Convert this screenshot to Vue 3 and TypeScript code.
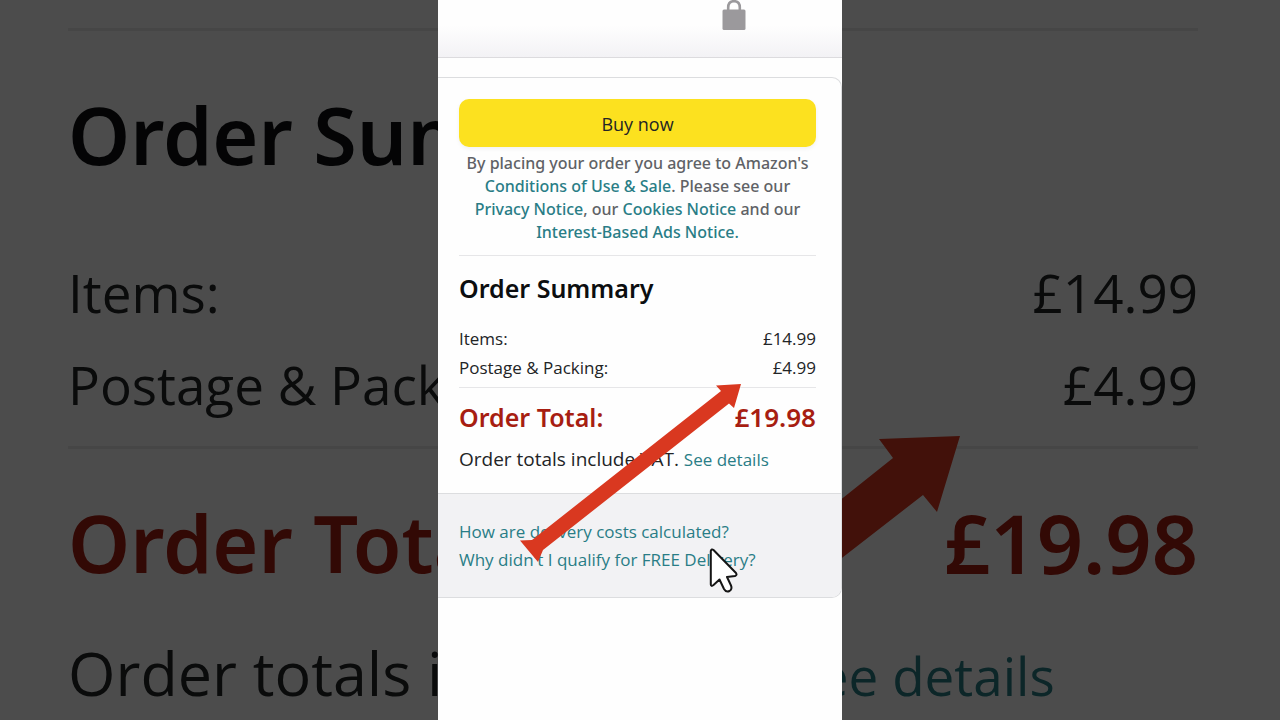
<script setup lang="ts">
interface Charge {
  label: string
  amount: string
}

const charges: Charge[] = [
  { label: 'Items:', amount: '£14.99' },
  { label: 'Postage & Packing:', amount: '£4.99' },
]
const total: Charge = { label: 'Order Total:', amount: '£19.98' }
const helpLinks: string[] = [
  'How are delivery costs calculated?',
  "Why didn't I qualify for FREE Delivery?",
]
</script>

<template>
  <div class="stage">
    <section class="backdrop" aria-hidden="true">
      <h2 class="title">Order Summary</h2>
      <dl class="charges">
        <div v-for="row in charges" :key="row.label" class="row">
          <dt>{{ row.label }}</dt>
          <dd>{{ row.amount }}</dd>
        </div>
      </dl>
      <div class="total">
        <span>{{ total.label }}</span>
        <span class="sum">{{ total.amount }}</span>
      </div>
      <p class="vat">Order totals include VAT. <a href="#details" tabindex="-1">See details</a></p>
      <svg class="overlay" viewBox="0 0 1280 720" preserveAspectRatio="xMidYMin slice">
        <path d="M960 436 879 439 893 458 302 929 328 957 923 495 937 512Z" fill="#dc3820" />
      </svg>
    </section>

    <main class="phone">
      <header class="bar">
        <svg class="lock" viewBox="0 0 24 31" role="img" aria-label="Secure checkout">
          <path d="M6.200 12V7.500C6.200 3.500 8.500 1.200 12 1.200S17.800 3.500 17.800 7.500V12" fill="none" stroke="#9b999c" stroke-width="2.600" />
          <rect x="0.500" y="9.500" width="23" height="20.500" rx="1.500" fill="#9b999c" />
        </svg>
      </header>

      <div class="card">
        <div class="body">
          <button class="buy" type="button">Buy now</button>
          <p class="legal">
            By placing your order you agree to Amazon's<br />
            <a href="#conditions">Conditions of Use &amp; Sale</a>. Please see our<br />
            <a href="#privacy">Privacy Notice</a>, our <a href="#cookies">Cookies Notice</a> and our<br />
            <a href="#ads">Interest-Based Ads Notice.</a>
          </p>
          <h1 class="title">Order Summary</h1>
          <dl class="charges">
            <div v-for="row in charges" :key="row.label" class="row">
              <dt>{{ row.label }}</dt>
              <dd>{{ row.amount }}</dd>
            </div>
          </dl>
          <div class="total">
            <span>{{ total.label }}</span>
            <span class="sum">{{ total.amount }}</span>
          </div>
          <p class="vat">Order totals include VAT. <a href="#details">See details</a></p>
        </div>
        <nav class="help">
          <a v-for="link in helpLinks" :key="link" href="#help">{{ link }}</a>
        </nav>
      </div>

      <svg class="overlay" viewBox="0 0 404 720" preserveAspectRatio="xMinYMin meet" aria-hidden="true">
        <path d="M303 384 278 385.500 283 391 94 540 82 540.500 100 562 105 550 291 403.500 296 408Z" fill="#d93820" />
        <path
          d="M272.800 551V584.500Q273 587 275.500 585L281.500 579.500 286 589Q288 592.500 291.500 591Q294.500 589 293 585.500L289 577 297 576Q299.500 575 298 573L275.500 550Q273.500 548.500 272.800 551Z"
          fill="#fff" stroke="#151515" stroke-width="2" stroke-linejoin="round"
        />
      </svg>
    </main>
  </div>
</template>

<style>
body {
  margin: 0;
}
</style>

<style scoped>
.stage {
  display: grid;
  min-height: 100vh;
  overflow: hidden;
  font-family: 'Open Sans', 'Noto Sans', sans-serif;
  color: #222426;
}

.stage * {
  box-sizing: border-box;
}

h1,
h2,
p,
dl,
dd {
  margin: 0;
}

a {
  color: #297d86;
  text-decoration: none;
}

.row,
.total {
  display: flex;
  justify-content: space-between;
}

.title,
.total {
  font-family: 'Noto Sans', 'Open Sans', sans-serif;
  font-weight: 600;
}

.title {
  color: #0c0e10;
}

.total {
  color: #a71e12;
}

.overlay {
  position: absolute;
  inset: 0;
  width: 100%;
  height: 100%;
  pointer-events: none;
}

.backdrop,
.phone {
  grid-area: 1 / 1;
  position: relative;
}

.backdrop {
  padding: 28px 82px 0 68px;
  background: #fefefe;
  filter: brightness(0.3);
  white-space: nowrap;
  overflow: hidden;
}

.backdrop .title {
  padding: 56px 0 64px;
  border-top: 3px solid #e8e8e8;
  font-size: 79px;
  line-height: 96px;
}

.backdrop .charges {
  padding-bottom: 15px;
  border-bottom: 3px solid #e8e8e8;
  font-size: 53px;
  line-height: 92px;
}

.backdrop .total {
  padding: 46px 0 42px;
  font-size: 79px;
  line-height: 96px;
}

.backdrop .sum {
  font-size: 81px;
}

.backdrop .vat {
  font-size: 61px;
  line-height: 80px;
}

.backdrop .vat a {
  font-size: 53px;
}

.phone {
  justify-self: center;
  width: min(404px, 100%);
  background: #fefefe;
}

.bar {
  display: flex;
  justify-content: flex-end;
  height: 58px;
  padding-right: 96px;
  border-bottom: 1px solid #dcdbde;
  background: linear-gradient(#fefefe 45%, #f3f2f5);
}

.lock {
  width: 24px;
  height: 31px;
}

.card {
  margin-top: 19px;
  border: 1px solid #dcdddf;
  border-left: 0;
  border-radius: 0 10px 10px 0;
  overflow: hidden;
}

.body {
  padding: 21px 25px 17px 21px;
}

.buy {
  display: block;
  width: 100%;
  height: 48px;
  padding: 2px 0 0;
  border: 0;
  border-radius: 10px;
  background: #fce11f;
  box-shadow: 0 2px 4px #0000000d;
  color: #222426;
  font: inherit;
  font-size: 18px;
}

.legal {
  padding: 5px 0 11px;
  border-bottom: 1px solid #e6e6e8;
  color: #606266;
  font-family: 'Noto Sans', 'Open Sans', sans-serif;
  font-size: 16px;
  font-weight: 500;
  line-height: 23px;
  text-align: center;
  white-space: nowrap;
}

.phone .title {
  padding: 15px 0 19px;
  font-size: 25px;
  line-height: 34px;
}

.phone .charges {
  padding-bottom: 5px;
  border-bottom: 1px solid #e6e6e8;
  font-size: 17px;
  line-height: 29px;
}

.phone .total {
  padding: 12px 0 9px;
  font-size: 25px;
  line-height: 34px;
}

.phone .sum {
  font-size: 26px;
}

.phone .vat {
  font-size: 19px;
  line-height: 32px;
  white-space: nowrap;
}

.phone .vat a {
  font-size: 17px;
}

.help {
  display: flex;
  flex-direction: column;
  align-items: flex-start;
  padding: 24px 21px 23px;
  border-top: 1px solid #dcdddf;
  background: #f2f2f4;
  font-size: 17px;
  line-height: 28px;
  white-space: nowrap;
}
</style>
